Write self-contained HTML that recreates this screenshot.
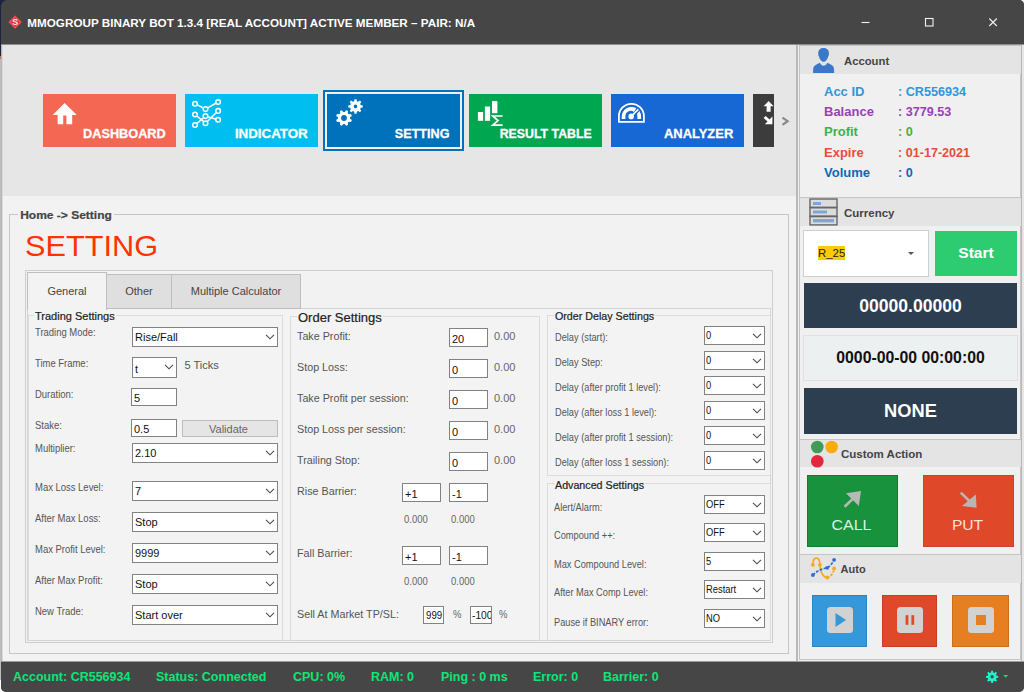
<!DOCTYPE html>
<html>
<head>
<meta charset="utf-8">
<title>MMOGROUP BINARY BOT</title>
<style>
*{box-sizing:border-box;margin:0;padding:0}
html,body{width:1024px;height:692px;overflow:hidden}
body{position:relative;background:#bdbdbd;font-family:"Liberation Sans",sans-serif;font-size:11px;color:#222}
.abs{position:absolute}
#win{position:absolute;left:1px;top:0;width:1023px;height:692px;background:#464646;border-radius:7px 5px 5px 5px;overflow:hidden}
#title{position:absolute;left:0;top:0;width:1023px;height:44px;background:#464646}
#title .t{position:absolute;left:26.3px;top:15.6px;font-size:11.7px;font-weight:bold;color:#fff;white-space:nowrap;line-height:13px}
#top{position:absolute;left:2px;top:44px;width:794px;height:152px;background:#e6e6e6}
#main{position:absolute;left:2px;top:196px;width:794px;height:465px;background:#f2f2f2}
#status{position:absolute;left:0;top:661px;width:1023px;height:31px;border-top:1px solid #9a9a9a;background:#464646}
#status span{position:absolute;top:7.6px;font-size:12.5px;font-weight:bold;color:#0be678;white-space:nowrap;line-height:14px}
.tile{position:absolute;top:94px;width:133px;height:53px}
.tile .lb{-webkit-text-stroke:.3px #fff;position:absolute;right:11px;bottom:5px;font-size:13.5px;transform:scaleX(.94);transform-origin:right center;font-weight:bold;color:#fff;white-space:nowrap;line-height:16px}

.gb{position:absolute;border:1px solid #dcdcdc}
.gbl{-webkit-text-stroke:.2px currentColor;position:absolute;background:#f2f2f2;white-space:nowrap;line-height:13px;padding:0 1px}
.lbl{position:absolute;white-space:nowrap;font-size:11px;line-height:13px;color:#555;transform-origin:left center}
.nar{transform:scaleX(.86)}
.nar2{transform:scaleX(.84)}
.nt{display:inline-block;transform:scaleX(.85);transform-origin:left center}
.cb{position:absolute;background:#fff;border:1px solid #828282;height:20px;font-size:11px;line-height:18px;padding-left:2px;color:#111;white-space:nowrap;overflow:hidden}
.cb svg{position:absolute;right:2.5px;top:6px}
.tb{position:absolute;background:#fff;border:1px solid #828282;height:18px;font-size:11px;line-height:19px;padding-left:2px;color:#111;white-space:nowrap;overflow:hidden}
.val{position:absolute;white-space:nowrap;font-size:11px;line-height:13px;color:#666}
.tab{position:absolute;border:1px solid #bebebe;font-size:11px;color:#444;text-align:center;white-space:nowrap}
.ph{position:absolute;left:799px;width:223px;background:#e4e4e4}
.pht{position:absolute;font-size:11.5px;font-weight:bold;color:#444;white-space:nowrap;line-height:13px}
.acc{position:absolute;font-size:13px;font-weight:bold;white-space:nowrap;line-height:15px}
</style>
</head>
<body>
<div class="abs" style="left:0;top:0;width:8px;height:56px;background:#1d2442"></div><div class="abs" style="left:0;top:56px;width:2px;height:3px;background:#c07a35"></div>
<div class="abs" style="left:0;top:680px;width:1024px;height:12px;background:#fff"></div>
<div class="abs" style="left:1010px;top:0;width:14px;height:12px;background:#f4f4f4"></div>
<div id="win">
  <div id="title">
    <div class="t">MMOGROUP BINARY BOT 1.3.4 [REAL ACCOUNT] ACTIVE MEMBER – PAIR: N/A</div>
  </div>
  <div class="abs" style="left:0;top:44px;width:3px;height:617px;background:linear-gradient(90deg,#b8b8b8 0,#b8b8b8 1.5px,#dadada 1.5px)"></div>
  <div id="top"></div>
  <div id="main"></div>
  <div id="status">
    <span style="left:12px">Account: CR556934</span>
    <span style="left:155px">Status: Connected</span>
    <span style="left:292px">CPU: 0%</span>
    <span style="left:370px">RAM: 0</span>
    <span style="left:440px">Ping : 0 ms</span>
    <span style="left:532px">Error: 0</span>
    <span style="left:602px">Barrier: 0</span>
  </div>
</div>
<div class="gb" style="left:9px;top:214px;width:780px;height:440px;border-color:#c6c6c6"></div>
<div class="gbl" style="left:18px;top:208.6px;font-size:11px;font-weight:bold;color:#444;padding:0 2px;transform:scaleX(1.09);transform-origin:left center">Home -&gt; Setting</div>
<div class="abs" style="left:24.6px;top:228.2px;font-size:29.8px;line-height:35px;transform:scaleX(1.03);transform-origin:left center;color:#ff3300;white-space:nowrap">SETTING</div>
<div class="abs" style="left:25px;top:270px;width:748px;height:373px;border:1px solid #cecece;background:#f2f2f2"></div>
<div class="abs" style="left:27px;top:308px;width:744px;height:333px;border:1px solid #d4d4d4;background:#f3f3f3"></div>
<div class="tab" style="left:106px;top:274px;width:66px;height:35px;line-height:33px;background:#dfdfdf">Other</div>
<div class="tab" style="left:171px;top:274px;width:130px;height:35px;line-height:33px;background:#dfdfdf">Multiple Calculator</div>
<div class="tab" style="left:27px;top:272px;width:80px;height:38px;line-height:37px;background:#f3f3f3;border-bottom:none">General</div>
<div class="gb" style="left:28px;top:315px;width:255px;height:326px;border-bottom:none"></div>
<div class="gbl" style="left:34px;top:310px;font-size:11px;color:#222;background:#f3f3f3">Trading Settings</div>
<div class="lbl nar" style="left:35.3px;top:326px;">Trading Mode:</div>
<div class="lbl nar" style="left:35.3px;top:357px;">Time Frame:</div>
<div class="lbl nar" style="left:35.3px;top:388px;">Duration:</div>
<div class="lbl nar" style="left:35.3px;top:419px;">Stake:</div>
<div class="lbl nar" style="left:35.3px;top:442px;">Multiplier:</div>
<div class="lbl nar" style="left:35.3px;top:481px;">Max Loss Level:</div>
<div class="lbl nar" style="left:35.3px;top:512px;">After Max Loss:</div>
<div class="lbl nar" style="left:35.3px;top:543px;">Max Profit Level:</div>
<div class="lbl nar" style="left:35.3px;top:574px;">After Max Profit:</div>
<div class="lbl nar" style="left:35.3px;top:605px;">New Trade:</div>
<div class="cb" style="left:132px;top:327px;width:146px;height:20px;line-height:18px">Rise/Fall<svg width="10" height="6" viewBox="0 0 10 6"><path d="M1 .8 L5 4.8 L9 .8" fill="none" stroke="#4a4a4a" stroke-width="1.1"/></svg></div>
<div class="cb" style="left:132px;top:357px;width:45px;height:21px;line-height:22px">t<svg width="10" height="6" viewBox="0 0 10 6"><path d="M1 .8 L5 4.8 L9 .8" fill="none" stroke="#4a4a4a" stroke-width="1.1"/></svg></div>
<div class="lbl" style="left:184.5px;top:359.2px;">5 Ticks</div>
<div class="tb" style="left:131px;top:388px;width:46px;height:18px">5</div>
<div class="tb" style="left:131px;top:419px;width:46px;height:18px">0.5</div>
<div class="abs" style="left:182px;top:420px;width:96px;height:17px;background:#e5e5e5;border:1px solid #bdbdbd;font-size:11px;line-height:17px;text-align:center;text-indent:-3px;color:#666">Validate</div>
<div class="cb" style="left:132px;top:443px;width:146px;height:20px;line-height:18px">2.10<svg width="10" height="6" viewBox="0 0 10 6"><path d="M1 .8 L5 4.8 L9 .8" fill="none" stroke="#4a4a4a" stroke-width="1.1"/></svg></div>
<div class="cb" style="left:132px;top:481px;width:146px;height:20px;line-height:18px">7<svg width="10" height="6" viewBox="0 0 10 6"><path d="M1 .8 L5 4.8 L9 .8" fill="none" stroke="#4a4a4a" stroke-width="1.1"/></svg></div>
<div class="cb" style="left:132px;top:512px;width:146px;height:20px;line-height:18px">Stop<svg width="10" height="6" viewBox="0 0 10 6"><path d="M1 .8 L5 4.8 L9 .8" fill="none" stroke="#4a4a4a" stroke-width="1.1"/></svg></div>
<div class="cb" style="left:132px;top:543px;width:146px;height:20px;line-height:18px">9999<svg width="10" height="6" viewBox="0 0 10 6"><path d="M1 .8 L5 4.8 L9 .8" fill="none" stroke="#4a4a4a" stroke-width="1.1"/></svg></div>
<div class="cb" style="left:132px;top:574px;width:146px;height:20px;line-height:18px">Stop<svg width="10" height="6" viewBox="0 0 10 6"><path d="M1 .8 L5 4.8 L9 .8" fill="none" stroke="#4a4a4a" stroke-width="1.1"/></svg></div>
<div class="cb" style="left:132px;top:605px;width:146px;height:20px;line-height:18px">Start over<svg width="10" height="6" viewBox="0 0 10 6"><path d="M1 .8 L5 4.8 L9 .8" fill="none" stroke="#4a4a4a" stroke-width="1.1"/></svg></div>
<div class="gb" style="left:290px;top:316px;width:250px;height:325px;border-bottom:none"></div>
<div class="gbl" style="left:297px;top:310px;font-size:13px;line-height:15px;color:#222;background:#f3f3f3">Order Settings</div>
<div class="lbl" style="left:297px;top:330px;color:#555;font-size:10.75px">Take Profit:</div>
<div class="tb" style="left:449px;top:328px;width:39px;height:19px;line-height:20px">20</div>
<div class="val" style="left:494px;top:330px">0.00</div>
<div class="lbl" style="left:297px;top:361px;color:#555;font-size:10.75px">Stop Loss:</div>
<div class="tb" style="left:449px;top:359px;width:39px;height:19px;line-height:20px">0</div>
<div class="val" style="left:494px;top:361px">0.00</div>
<div class="lbl" style="left:297px;top:392px;color:#555;font-size:10.75px">Take Profit per session:</div>
<div class="tb" style="left:449px;top:390px;width:39px;height:19px;line-height:20px">0</div>
<div class="val" style="left:494px;top:392px">0.00</div>
<div class="lbl" style="left:297px;top:423px;color:#555;font-size:10.75px">Stop Loss per session:</div>
<div class="tb" style="left:449px;top:421px;width:39px;height:19px;line-height:20px">0</div>
<div class="val" style="left:494px;top:423px">0.00</div>
<div class="lbl" style="left:297px;top:454px;color:#555;font-size:10.75px">Trailing Stop:</div>
<div class="tb" style="left:449px;top:452px;width:39px;height:19px;line-height:20px">0</div>
<div class="val" style="left:494px;top:454px">0.00</div>
<div class="lbl" style="left:297px;top:485px;color:#555;font-size:10.75px">Rise Barrier:</div>
<div class="tb" style="left:402px;top:483px;width:39px;height:19px;line-height:20px">+1</div>
<div class="tb" style="left:449px;top:483px;width:39px;height:19px;line-height:20px">-1</div>
<div class="val nar" style="left:404px;top:513px;transform-origin:left center">0.000</div><div class="val nar" style="left:451px;top:513px;transform-origin:left center">0.000</div>
<div class="lbl" style="left:297px;top:547px;color:#555;font-size:10.75px">Fall Barrier:</div>
<div class="tb" style="left:402px;top:546px;width:39px;height:19px;line-height:20px">+1</div>
<div class="tb" style="left:449px;top:546px;width:39px;height:19px;line-height:20px">-1</div>
<div class="val nar" style="left:404px;top:575px;transform-origin:left center">0.000</div><div class="val nar" style="left:451px;top:575px;transform-origin:left center">0.000</div>
<div class="lbl" style="left:297px;top:608px;color:#555;font-size:10.75px">Sell At Market TP/SL:</div>
<div class="tb" style="left:423px;top:606px;width:21px;height:18px;line-height:17px"><span class="nt" style="transform:scaleX(.88)">999</span></div>
<div class="val nar" style="left:453px;top:608px;transform-origin:left center">%</div>
<div class="tb" style="left:470px;top:606px;width:22px;height:18px;line-height:17px;padding-left:1px"><span class="nt" style="transform:scaleX(.93)">-100</span></div>
<div class="val nar" style="left:499px;top:608px;transform-origin:left center">%</div>
<div class="gb" style="left:547px;top:315px;width:224px;height:161px"></div>
<div class="gbl" style="left:554px;top:310px;font-size:10.7px;color:#222;background:#f3f3f3">Order Delay Settings</div>
<div class="lbl nar2" style="left:555px;top:331px;color:#555">Delay (start):</div>
<div class="cb" style="left:704px;top:326px;width:61px;height:19px;line-height:17px;padding-left:1px"><span class="nt">0</span><svg width="10" height="6" viewBox="0 0 10 6"><path d="M1 .8 L5 4.8 L9 .8" fill="none" stroke="#4a4a4a" stroke-width="1.1"/></svg></div>
<div class="lbl nar2" style="left:555px;top:356px;color:#555">Delay Step:</div>
<div class="cb" style="left:704px;top:351px;width:61px;height:19px;line-height:17px;padding-left:1px"><span class="nt">0</span><svg width="10" height="6" viewBox="0 0 10 6"><path d="M1 .8 L5 4.8 L9 .8" fill="none" stroke="#4a4a4a" stroke-width="1.1"/></svg></div>
<div class="lbl nar2" style="left:555px;top:381px;color:#555">Delay (after profit 1 level):</div>
<div class="cb" style="left:704px;top:376px;width:61px;height:19px;line-height:17px;padding-left:1px"><span class="nt">0</span><svg width="10" height="6" viewBox="0 0 10 6"><path d="M1 .8 L5 4.8 L9 .8" fill="none" stroke="#4a4a4a" stroke-width="1.1"/></svg></div>
<div class="lbl nar2" style="left:555px;top:406px;color:#555">Delay (after loss 1 level):</div>
<div class="cb" style="left:704px;top:401px;width:61px;height:19px;line-height:17px;padding-left:1px"><span class="nt">0</span><svg width="10" height="6" viewBox="0 0 10 6"><path d="M1 .8 L5 4.8 L9 .8" fill="none" stroke="#4a4a4a" stroke-width="1.1"/></svg></div>
<div class="lbl nar2" style="left:555px;top:431px;color:#555">Delay (after profit 1 session):</div>
<div class="cb" style="left:704px;top:426px;width:61px;height:19px;line-height:17px;padding-left:1px"><span class="nt">0</span><svg width="10" height="6" viewBox="0 0 10 6"><path d="M1 .8 L5 4.8 L9 .8" fill="none" stroke="#4a4a4a" stroke-width="1.1"/></svg></div>
<div class="lbl nar2" style="left:555px;top:456px;color:#555">Delay (after loss 1 session):</div>
<div class="cb" style="left:704px;top:451px;width:61px;height:19px;line-height:17px;padding-left:1px"><span class="nt">0</span><svg width="10" height="6" viewBox="0 0 10 6"><path d="M1 .8 L5 4.8 L9 .8" fill="none" stroke="#4a4a4a" stroke-width="1.1"/></svg></div>
<div class="gb" style="left:547px;top:483px;width:224px;height:158px;border-bottom:none"></div>
<div class="gbl" style="left:554px;top:479px;font-size:10.7px;color:#222;background:#f3f3f3">Advanced Settings</div>
<div class="lbl nar2" style="left:554px;top:501px;color:#555">Alert/Alarm:</div>
<div class="cb" style="left:704px;top:495px;width:61px;height:19px;line-height:17px;padding-left:1px"><span class="nt">OFF</span><svg width="10" height="6" viewBox="0 0 10 6"><path d="M1 .8 L5 4.8 L9 .8" fill="none" stroke="#4a4a4a" stroke-width="1.1"/></svg></div>
<div class="lbl nar2" style="left:554px;top:529px;color:#555">Compound ++:</div>
<div class="cb" style="left:704px;top:523px;width:61px;height:19px;line-height:17px;padding-left:1px"><span class="nt">OFF</span><svg width="10" height="6" viewBox="0 0 10 6"><path d="M1 .8 L5 4.8 L9 .8" fill="none" stroke="#4a4a4a" stroke-width="1.1"/></svg></div>
<div class="lbl nar2" style="left:554px;top:558px;color:#555">Max Compound Level:</div>
<div class="cb" style="left:704px;top:552px;width:61px;height:19px;line-height:17px;padding-left:1px"><span class="nt">5</span><svg width="10" height="6" viewBox="0 0 10 6"><path d="M1 .8 L5 4.8 L9 .8" fill="none" stroke="#4a4a4a" stroke-width="1.1"/></svg></div>
<div class="lbl nar2" style="left:554px;top:586px;color:#555">After Max Comp Level:</div>
<div class="cb" style="left:704px;top:580px;width:61px;height:19px;line-height:17px;padding-left:1px"><span class="nt">Restart</span><svg width="10" height="6" viewBox="0 0 10 6"><path d="M1 .8 L5 4.8 L9 .8" fill="none" stroke="#4a4a4a" stroke-width="1.1"/></svg></div>
<div class="lbl nar2" style="left:554px;top:616px;color:#555">Pause if BINARY error:</div>
<div class="cb" style="left:704px;top:609px;width:61px;height:19px;line-height:17px;padding-left:1px"><span class="nt">NO</span><svg width="10" height="6" viewBox="0 0 10 6"><path d="M1 .8 L5 4.8 L9 .8" fill="none" stroke="#4a4a4a" stroke-width="1.1"/></svg></div>
<div class="abs" style="left:797px;top:44px;width:227px;height:617px;background:#f0f0f0"></div>
<div class="abs" style="left:796px;top:44px;width:2px;height:617px;background:#b8b8b8"></div>
<div class="abs" style="left:1021px;top:44px;width:3px;height:617px;background:linear-gradient(90deg,#b6b6b6 0,#b6b6b6 1.4px,#e6e6e6 1.4px)"></div>
<div class="abs" style="left:799px;top:45px;width:222px;height:153px;border:1px solid #c4c4c4;background:#f0f0f0"></div>
<div class="ph" style="top:46px;height:28px;width:221px;left:800px"></div>
<svg class="abs" style="left:805px;top:44px" width="40" height="32" viewBox="805 44 40 32"><path d="M823.4 47.9 C819.6 47.9 818 50.6 818.3 54 C818.2 54.6 818.3 55.6 818.8 56 C819.4 58.8 821.4 61.8 823.6 61.8 C825.8 61.8 827.8 58.8 828.4 56 C828.9 55.6 829 54.6 828.9 54 C829.4 50.4 827.4 47.9 823.4 47.9 Z" fill="#3b78c9"/><path d="M819.8 62.7 C817 64.2 814.6 65 813.6 67 C813.1 68.4 813.1 70.5 813.1 72.9 L834.1 72.9 C834.1 70.5 834.1 68.4 833.6 67 C832.6 65 830.2 64.2 827.4 62.7 C826.4 64.6 825 65.7 823.6 65.7 C822.2 65.7 820.8 64.6 819.8 62.7 Z" fill="#3b78c9"/></svg>
<div class="pht" style="left:844px;top:55px;font-size:11.3px">Account</div>
<div class="acc" style="left:824px;top:84px;color:#2f96dc"><span style="display:inline-block;width:74px">Acc ID</span><span style="font-size:12.6px">: CR556934</span></div>
<div class="acc" style="left:824px;top:104px;color:#9b3fb5"><span style="display:inline-block;width:74px">Balance</span><span style="font-size:12.6px">: 3779.53</span></div>
<div class="acc" style="left:824px;top:124px;color:#3cb34a"><span style="display:inline-block;width:74px">Profit</span><span style="font-size:12.6px">: 0</span></div>
<div class="acc" style="left:824px;top:145px;color:#e74c3c"><span style="display:inline-block;width:74px">Expire</span><span style="font-size:12.6px">: 01-17-2021</span></div>
<div class="acc" style="left:824px;top:165px;color:#0a6ab8"><span style="display:inline-block;width:74px">Volume</span><span style="font-size:12.6px">: 0</span></div>
<div class="abs" style="left:799px;top:197px;width:222px;height:243px;border:1px solid #c4c4c4;background:#f0f0f0"></div>
<div class="ph" style="top:198px;height:28px;width:221px;left:800px"></div>
<svg class="abs" style="left:809px;top:198px" width="29" height="28" viewBox="0 0 29 28"><g fill="#dcdcdc" stroke="#666" stroke-width="1.4"><rect x="1" y="1" width="27" height="8.3"/><rect x="1" y="9.8" width="27" height="8.3"/><rect x="1" y="18.6" width="27" height="8.3"/></g><rect x="4" y="4" width="8" height="3" fill="#7aa7d9"/><rect x="4" y="12.5" width="14" height="3" fill="#7aa7d9"/><rect x="4" y="21" width="21" height="3.4" fill="#7aa7d9"/></svg>
<div class="pht" style="left:844px;top:206.7px">Currency</div>
<div class="abs" style="left:803px;top:230px;width:126px;height:47px;background:#fff;border:1px solid #cfcfcf"></div>
<div class="abs" style="left:818px;top:246px;font-size:11.4px;line-height:14px;color:#222;background:#ffcb05;white-space:nowrap">R_25</div>
<div class="abs" style="left:908px;top:252px;width:0;height:0;border-left:3px solid transparent;border-right:3px solid transparent;border-top:3px solid #555"></div>
<div class="abs" style="left:935px;top:231px;width:82px;height:45px;background:#2ecc71;color:#fff;font-size:15.5px;font-weight:bold;text-align:center;line-height:44px">Start</div>
<div class="abs" style="left:804px;top:283px;width:213px;height:45px;background:#2c3e50;color:#fff;font-size:17.6px;font-weight:bold;text-align:center;line-height:46px">00000.00000</div>
<div class="abs" style="left:803px;top:335px;width:215px;height:46px;background:#ecf0f1;border:1px solid #dde1e3;color:#111;font-size:15.8px;font-weight:bold;text-align:center;line-height:43px">0000-00-00 00:00:00</div>
<div class="abs" style="left:804px;top:387.5px;width:213px;height:46px;background:#2c3e50;color:#fff;font-size:18.3px;font-weight:bold;text-align:center;line-height:46px">NONE</div>
<div class="abs" style="left:799px;top:439px;width:222px;height:116px;border:1px solid #c4c4c4;background:#f0f0f0"></div>
<div class="ph" style="top:440px;height:27px;width:221px;left:800px"></div>
<svg class="abs" style="left:809px;top:439px" width="32" height="30" viewBox="0 0 32 30"><circle cx="8.3" cy="8" r="6.3" fill="#3f9b57"/><circle cx="22.6" cy="8" r="6.3" fill="#fbab0c"/><circle cx="8.3" cy="22.3" r="6.3" fill="#e0283f"/></svg>
<div class="pht" style="left:841px;top:448px">Custom Action</div>
<div class="abs" style="left:807px;top:474.5px;width:91px;height:72px;background:#18923c;border:1px solid #0f7c31"></div>
<div class="abs" style="left:923px;top:474.5px;width:91px;height:72px;background:#e0482a;border:1px solid #c8442a"></div>
<div class="abs" style="left:806px;top:516px;width:91px;text-align:center;font-size:14.6px;line-height:18px;transform:scaleX(1.09);color:#dff3e1">CALL</div>
<div class="abs" style="left:922px;top:516px;width:91px;text-align:center;font-size:14.6px;line-height:18px;transform:scaleX(1.07);color:#fbe3dd">PUT</div>
<svg class="abs" style="left:840px;top:488px" width="24" height="22" viewBox="840 488 24 22"><path d="M844.6 506.8 L854 497.6" stroke="#b7b9b7" stroke-width="2.6" fill="none"/><path d="M846 493.2 L861 491 L858.8 506 Z" fill="#b7b9b7"/></svg>
<svg class="abs" style="left:956px;top:488px" width="24" height="22" viewBox="956 488 24 22"><path d="M960.8 492.6 L969.6 501.2" stroke="#b9b5b3" stroke-width="2.6" fill="none"/><path d="M975.8 494.6 L976.6 507.8 L962 506 Z" fill="#b9b5b3"/></svg>
<div class="abs" style="left:799px;top:554px;width:222px;height:106px;border:1px solid #c4c4c4;background:#f0f0f0"></div>
<div class="ph" style="top:555px;height:28px;width:221px;left:800px"></div>
<svg class="abs" style="left:800px;top:550px" width="48" height="36" viewBox="800 550 48 36"><path d="M812.9 564.8 C812.9 556 819.9 556 819.9 564.8 C820.3 572 823 577.5 827.2 577.5" fill="none" stroke="#f8a81b" stroke-width="1.7"/><path d="M827.2 577.5 C831 577 833.4 573 834.1 568.5" fill="none" stroke="#f8a81b" stroke-width="1.7" stroke-dasharray="2.6 1.3"/><path d="M812.9 575 C817 570.5 822 569 827.2 567.8 C830.5 566 832.5 563 834.1 559.8" fill="none" stroke="#2f6fd0" stroke-width="1.7" stroke-dasharray="2.8 1.4"/><g fill="#f8a81b"><circle cx="812.9" cy="564.8" r="1.9"/><circle cx="819.9" cy="564.8" r="1.9"/><circle cx="827.2" cy="577.5" r="1.9"/><circle cx="834.1" cy="568.5" r="1.9"/></g><g fill="#2f6fd0"><circle cx="812.9" cy="575" r="1.9"/><circle cx="827.2" cy="567.8" r="1.9"/><circle cx="834.1" cy="559.8" r="1.9"/></g></svg>
<div class="pht" style="left:840.6px;top:563px;font-size:11px">Auto</div>
<div class="abs" style="left:812px;top:595px;width:55px;height:52px;background:#3498db;border:1px solid rgba(0,0,0,.12)"></div>
<svg class="abs" style="left:826.5px;top:607.4px" width="26" height="26" viewBox="0 0 26 26"><rect x="0" y="0" width="26" height="26" rx="3.5" fill="#d2d2d2"/><path d="M8.5 6 L19 13 L8.5 20 Z" fill="#3498db"/></svg>
<div class="abs" style="left:882px;top:595px;width:55px;height:52px;background:#e0482a;border:1px solid rgba(0,0,0,.12)"></div>
<svg class="abs" style="left:896.5px;top:607.4px" width="26" height="26" viewBox="0 0 26 26"><rect x="0" y="0" width="26" height="26" rx="3.5" fill="#d2d2d2"/><rect x="8.6" y="8.2" width="2.8" height="9.6" fill="#e0482a"/><rect x="14.4" y="8.2" width="2.8" height="9.6" fill="#e0482a"/></svg>
<div class="abs" style="left:952px;top:595px;width:57px;height:52px;background:#e67e22;border:1px solid rgba(0,0,0,.12)"></div>
<svg class="abs" style="left:967.5px;top:607.4px" width="26" height="26" viewBox="0 0 26 26"><rect x="0" y="0" width="26" height="26" rx="3.5" fill="#d2d2d2"/><rect x="8" y="8" width="10" height="10" fill="#e67e22"/></svg>

<div class="abs" style="left:1px;top:44px;width:1023px;height:1px;background:#8e8e8e"></div>
<!-- tiles -->
<div class="tile" style="left:43px;background:#f46752"><div class="lb" style="transform:scaleX(0.943);right:10px">DASHBOARD</div></div>
<div class="tile" style="left:185px;background:#00bff0"><div class="lb" style="transform:scaleX(0.988);right:10.4px">INDICATOR</div></div>
<div class="abs" style="left:323px;top:90px;width:141px;height:61px;border:2px solid #0072bc;background:#f0f0f0"></div>
<div class="tile" style="left:327px;background:#0072bc"><div class="lb" style="transform:scaleX(0.935);right:10.4px">SETTING</div></div>
<div class="tile" style="left:469px;background:#00a650"><div class="lb" style="transform:scaleX(0.914);right:10.4px">RESULT TABLE</div></div>
<div class="tile" style="left:611px;background:#1767d4"><div class="lb" style="transform:scaleX(0.959);right:11px">ANALYZER</div></div>
<div class="tile" style="left:753px;width:21px;background:#3c3c3c"></div>
<svg class="abs" style="left:0;top:0" width="1024" height="692" viewBox="0 0 1024 692">
<path d="M15.1 15.2 L22 22.1 L15.1 29 L8.2 22.1 Z" fill="#d8343a"/><path d="M15.1 16.6 L20.6 22.1 L15.1 27.6 L9.6 22.1 Z" fill="none" stroke="#ee8a8c" stroke-width=".7"/><text x="15.1" y="25.3" font-family="Liberation Sans" font-weight="bold" font-size="8.8" fill="#fde3e3" text-anchor="middle">S</text>
<g stroke="#f2f2f2" stroke-width="1.1" fill="none"><path d="M861.5 22.5 H869.5"/><rect x="925.5" y="18.5" width="7.5" height="7.5"/><path d="M989.3 18.5 L996.8 26 M996.8 18.5 L989.3 26"/></g>
<path d="M64.6 103 L76.8 114.9 L72.2 114.9 L72.2 124.2 L66.4 124.2 L66.4 115.6 L63.2 115.6 L63.2 124.2 L57.6 124.2 L57.6 114.9 L52.7 114.9 Z" fill="#fff"/>
<g stroke="#fff" stroke-width="1.5" fill="none"><path d="M195 103.7 L205.5 109.1"/><path d="M205.5 109.1 L218.1 102"/><path d="M195 114.5 L205.5 123.2"/><path d="M195 125 L205.5 116.1"/><path d="M205.5 116.1 L218.1 119.7"/><path d="M205.5 123.2 L218.1 110.9"/></g><g stroke="#fff" stroke-width="1.5" fill="#00bdef"><circle cx="195" cy="103.7" r="2.3"/><circle cx="205.5" cy="109.1" r="2.3"/><circle cx="218.1" cy="102" r="2.3"/><circle cx="218.1" cy="110.9" r="2.3"/><circle cx="195" cy="114.5" r="2.3"/><circle cx="205.5" cy="116.1" r="2.3"/><circle cx="218.1" cy="119.7" r="2.3"/><circle cx="205.5" cy="123.2" r="2.3"/><circle cx="195" cy="125" r="2.3"/></g>
<path d="M356.86 111.63 L356.50 113.63 L354.50 113.63 L354.14 111.63 L352.77 111.06 L351.09 112.22 L349.68 110.81 L350.84 109.13 L350.27 107.76 L348.27 107.40 L348.27 105.40 L350.27 105.04 L350.84 103.67 L349.68 101.99 L351.09 100.58 L352.77 101.74 L354.14 101.17 L354.50 99.17 L356.50 99.17 L356.86 101.17 L358.23 101.74 L359.91 100.58 L361.32 101.99 L360.16 103.67 L360.73 105.04 L362.73 105.40 L362.73 107.40 L360.73 107.76 L360.16 109.13 L361.32 110.81 L359.91 112.22 L358.23 111.06 Z M357.30 106.40 A1.8 1.8 0 1 0 353.70 106.40 A1.8 1.8 0 1 0 357.30 106.40 Z" fill="#fff" fill-rule="evenodd"/><path d="M350.04 118.84 L351.84 120.05 L350.99 122.10 L348.86 121.68 L347.68 122.86 L348.10 124.99 L346.05 125.84 L344.84 124.04 L343.16 124.04 L341.95 125.84 L339.90 124.99 L340.32 122.86 L339.14 121.68 L337.01 122.10 L336.16 120.05 L337.96 118.84 L337.96 117.16 L336.16 115.95 L337.01 113.90 L339.14 114.32 L340.32 113.14 L339.90 111.01 L341.95 110.16 L343.16 111.96 L344.84 111.96 L346.05 110.16 L348.10 111.01 L347.68 113.14 L348.86 114.32 L350.99 113.90 L351.84 115.95 L350.04 117.16 Z M346.90 118.00 A2.9 2.9 0 1 0 341.10 118.00 A2.9 2.9 0 1 0 346.90 118.00 Z" fill="#fff" fill-rule="evenodd"/>
<g fill="#fff"><rect x="477.9" y="112" width="5.2" height="8.8"/><rect x="484.9" y="106.5" width="5.2" height="14.3"/><rect x="492" y="101.1" width="5.4" height="12.1"/></g><path d="M502.6 116 L492.8 116 L498 120.6 L492.8 125.1 L502.6 125.1" fill="none" stroke="#fff" stroke-width="1.7"/>
<path d="M618.9 121.8 L618.9 116.3 A12.5 12.5 0 0 1 643.9 116.3 L643.9 121.8 Z" fill="none" stroke="#fff" stroke-width="1.8"/><path d="M621.7 118.9 L621.7 116.6 A9.7 9.7 0 0 1 636.3 108.3 L633.9 111.9 A5.4 5.4 0 0 0 625.4 116.6 L625.4 118.9 Z" fill="#fff"/><path d="M639.4 110.9 A9.7 9.7 0 0 1 641.1 116.6 L641.1 118.9 L637.4 118.9 L637.4 116.6 A5.4 5.4 0 0 0 637 113.9 Z" fill="#fff"/><circle cx="631.2" cy="116.4" r="2.8" fill="#fff"/><path d="M631.2 116.4 L638.3 109.4" stroke="#fff" stroke-width="1.6"/>
<path d="M768.6 101 L773.6 106.3 L770.6 106.3 L770.6 111.8 L766.6 111.8 L766.6 106.3 L763.6 106.3 Z" fill="#fff"/><path d="M772.4 116.4 L772.4 124.3 L764.8 124.3 L767.6 121.6 L763.6 117.9 L765.6 115.9 L769.6 119.6 Z" fill="#fff"/><path d="M782.5 117.6 L787.6 121.2 L782.5 124.8" fill="none" stroke="#8a8a8a" stroke-width="2.2"/>
<path d="M993.24 681.15 L992.95 682.94 L991.25 682.94 L990.96 681.15 L989.82 680.68 L988.36 681.74 L987.16 680.54 L988.22 679.08 L987.75 677.94 L985.96 677.65 L985.96 675.95 L987.75 675.66 L988.22 674.52 L987.16 673.06 L988.36 671.86 L989.82 672.92 L990.96 672.45 L991.25 670.66 L992.95 670.66 L993.24 672.45 L994.38 672.92 L995.84 671.86 L997.04 673.06 L995.98 674.52 L996.45 675.66 L998.24 675.95 L998.24 677.65 L996.45 677.94 L995.98 679.08 L997.04 680.54 L995.84 681.74 L994.38 680.68 Z M993.80 676.80 A1.7 1.7 0 1 0 990.40 676.80 A1.7 1.7 0 1 0 993.80 676.80 Z" fill="#19f5c8" fill-rule="evenodd"/><path d="M1003.2 675 L1008.2 675 L1005.7 677.8 Z" fill="#12e070"/>
</svg>
</body>
</html>
